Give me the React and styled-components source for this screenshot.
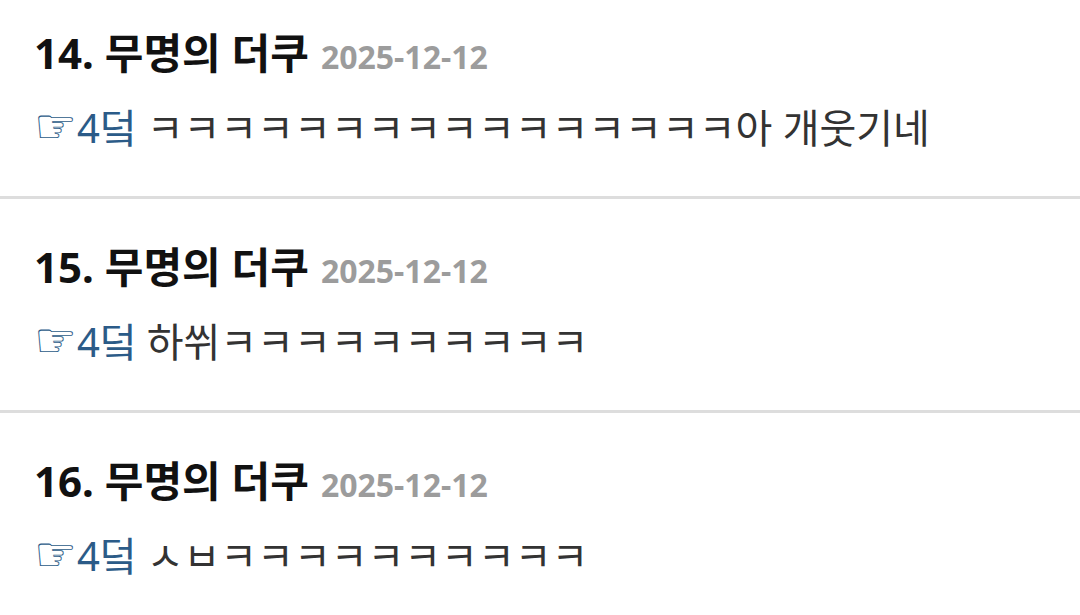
import React from "react";
import styled, { createGlobalStyle } from "styled-components";

const Global = createGlobalStyle`
  html, body { margin: 0; padding: 0; background: #fff; overflow: hidden; }
  body { font-family: "Noto Sans", "Noto Sans CJK KR", sans-serif; }
`;

const List = styled.ul`
  list-style: none;
  margin: -15px 0 0;
  padding: 0;
`;

const Item = styled.li`
  padding: 33px 34px 33px 34px;
  border-bottom: 3px solid #dddddd;
`;

const Header = styled.div`
  display: flex;
  align-items: baseline;
  gap: 12px;
  height: 70px;
  line-height: 70px;
`;

const Title = styled.span`
  font-size: 42px;
  font-weight: 700;
  color: #111;
`;

const DateText = styled.span`
  font-size: 32px;
  font-weight: 700;
  color: #9c9c9c;
`;

const Body = styled.div`
  margin-top: 5px;
  height: 70px;
  line-height: 70px;
  font-size: 40px;
  color: #333;
  white-space: nowrap;
`;

const Ref = styled.span`
  color: #2b5b88;
  margin-right: 10px;
`;

const Hand = styled.span`
  font-family: "DejaVu Sans", sans-serif;
  font-size: 48px;
  line-height: 0;
`;

const comments = [
  { n: 14, text: "ㅋㅋㅋㅋㅋㅋㅋㅋㅋㅋㅋㅋㅋㅋㅋㅋ아 개웃기네" },
  { n: 15, text: "하쒸ㅋㅋㅋㅋㅋㅋㅋㅋㅋㅋ" },
  { n: 16, text: "ㅅㅂㅋㅋㅋㅋㅋㅋㅋㅋㅋㅋ" },
];

export default function App() {
  return (
    <>
      <Global />
      <List>
        {comments.map((c) => (
          <Item key={c.n}>
            <Header>
              <Title>{c.n}. 무명의 더쿠</Title>
              <DateText>2025-12-12</DateText>
            </Header>
            <Body>
              <Ref>
                <Hand>☞</Hand>4덬
              </Ref>
              {c.text}
            </Body>
          </Item>
        ))}
      </List>
    </>
  );
}
